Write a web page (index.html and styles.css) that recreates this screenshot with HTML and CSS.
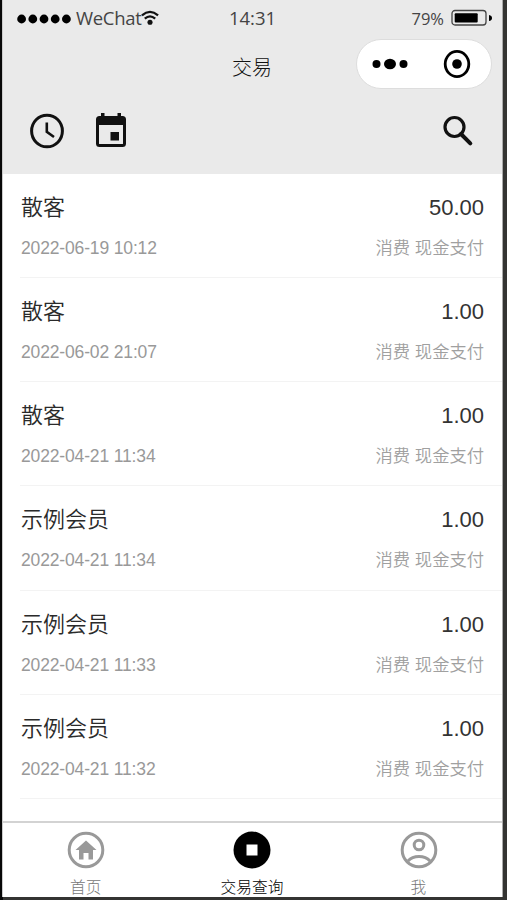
FILE: index.html
```html
<!DOCTYPE html>
<html lang="zh-CN">
<head>
<meta charset="utf-8">
<title>交易</title>
<link rel="stylesheet" href="styles.css">
</head>
<body>
<div class="phone">
  <header class="header">
    <div class="status">
      <div class="carrier">
        <svg class="signal" width="54" height="10" viewBox="0 0 54 10"><circle cx="4.6" cy="5" r="4.4"/><circle cx="15.8" cy="5" r="4.4"/><circle cx="27" cy="5" r="4.4"/><circle cx="38.2" cy="5" r="4.4"/><circle cx="49.4" cy="5" r="4.4"/></svg>
        <span class="carrier-name">WeChat</span>
        <svg class="wifi" width="18" height="16" viewBox="0 0 19 16" fill="none" stroke="#111" stroke-width="2.400"><path d="M1 5.200Q9.500-2 18 5.200M4 8.700Q9.500 3.800 15 8.700"/><circle cx="9.500" cy="12.500" r="2.700" fill="#111" stroke="none"/></svg>
      </div>
      <span class="time">14:31</span>
      <div class="power">
        <span class="percent">79%</span>
        <svg width="42" height="18" viewBox="0 0 42 18"><rect x="1" y="1.500" width="34" height="14.500" rx="3" fill="none" stroke="#444" stroke-width="1.300"/><rect x="3.700" y="4.200" width="23" height="9.300" rx="1"/><path d="M38 6q3 .5 3 3t-3 3z"/></svg>
      </div>
    </div>
    <div class="nav">
      <h1 class="title">交易</h1>
      <div class="capsule">
        <svg width="36" height="12" viewBox="0 0 36 12"><circle cx="4.500" cy="6" r="4"/><ellipse cx="18" cy="6" rx="6" ry="5.300"/><circle cx="31.500" cy="6" r="4"/></svg>
        <svg width="28" height="30" viewBox="0 0 28 30"><ellipse cx="14" cy="15" rx="11.800" ry="12.600" fill="none" stroke="#000" stroke-width="2.800"/><circle cx="14" cy="15" r="4.800"/></svg>
      </div>
    </div>
    <div class="tools">
      <svg class="clock" width="34" height="36" viewBox="0 0 34 36" fill="none" stroke="#111"><ellipse cx="17" cy="18" rx="15.400" ry="15.800" stroke-width="3"/><path d="M16.800 9.500v9.300l7.200 5.200" stroke-width="2.600"/></svg>
      <svg class="calendar" width="32" height="36" viewBox="0 0 32 36"><path fill="#111" fill-rule="evenodd" d="M6 0h3.500v3h13V0H26v3h1.500Q31 3 31 6.500v24q0 3.500-3.500 3.500h-23Q1 34 1 30.500v-24Q1 3 4.500 3H6zM4 12v18.500q0 .5.500.5h23q.5 0 .5-.5V12zM15.500 19h8.500v8.500h-8.500z"/></svg>
      <svg class="search" width="32" height="32" viewBox="0 0 32 32" fill="none" stroke="#111"><circle cx="12.500" cy="12" r="9.500" stroke-width="3.200"/><path d="M19 19l9.300 9.300" stroke-width="4" stroke-linecap="round"/></svg>
    </div>
  </header>
  <main class="list">
    <div class="row"><span class="name">散客</span><span class="amount">50.00</span><span class="date">2022-06-19 10:12</span><span class="kind">消费 现金支付</span></div>
    <div class="row"><span class="name">散客</span><span class="amount">1.00</span><span class="date">2022-06-02 21:07</span><span class="kind">消费 现金支付</span></div>
    <div class="row"><span class="name">散客</span><span class="amount">1.00</span><span class="date">2022-04-21 11:34</span><span class="kind">消费 现金支付</span></div>
    <div class="row"><span class="name">示例会员</span><span class="amount">1.00</span><span class="date">2022-04-21 11:34</span><span class="kind">消费 现金支付</span></div>
    <div class="row"><span class="name">示例会员</span><span class="amount">1.00</span><span class="date">2022-04-21 11:33</span><span class="kind">消费 现金支付</span></div>
    <div class="row"><span class="name">示例会员</span><span class="amount">1.00</span><span class="date">2022-04-21 11:32</span><span class="kind">消费 现金支付</span></div>
  </main>
  <nav class="tabs">
    <div class="tab">
      <svg width="38" height="38" viewBox="0 0 38 38"><circle cx="19" cy="19" r="16.800" fill="none" stroke="#999" stroke-width="3"/><path fill="#999" d="M19 9.500L29.500 19H26V28.500H21.500V22H16.500V28.500H12V19H8.500z"/></svg>
      <span>首页</span>
    </div>
    <div class="tab active">
      <svg width="38" height="38" viewBox="0 0 38 38"><circle cx="19" cy="19" r="18.500"/><path fill="#fff" d="M13.500 13.500h11v11h-11z"/></svg>
      <span>交易查询</span>
    </div>
    <div class="tab">
      <svg width="38" height="38" viewBox="0 0 38 38" fill="none" stroke="#999" stroke-width="3"><circle cx="19" cy="19" r="16.800"/><circle cx="19" cy="14" r="4.800"/><path d="M8 30Q12 25.500 19 25.500T30 30"/></svg>
      <span>我</span>
    </div>
  </nav>
</div>
</body>
</html>
```
FILE: styles.css
```css
* { box-sizing: border-box; }
body {
  margin: 0;
  height: 900px;
  overflow: hidden;
  padding: 0 4px 3px 2px;
  background: linear-gradient(90deg, #080808 0 3px, #343432 3px);
  font-family: "Liberation Sans", "Noto Sans CJK SC", sans-serif;
}
svg { display: block; flex: none; }
.phone {
  display: flex;
  flex-direction: column;
  height: 897px;
  background: #fff;
  border-right: 1px solid #aaa;
  border-left: 1px solid #ccc;
}
.header { height: 174px; background: #eaeaea; }
.status {
  display: grid;
  grid-template-columns: 1fr auto 1fr;
  align-items: center;
  height: 36px;
  padding: 0 9px 0 14px;
  font-family: "Open Sans", sans-serif;
  color: #444;
}
.carrier { display: flex; align-items: center; margin-top: -2px; }
.signal { margin-top: 3px; }
.carrier-name { margin-left: 5px; width: 65px; font-size: 18.5px; letter-spacing: -0.3px; white-space: nowrap; }
.wifi { margin-top: 1px; }
.time { font-size: 18.5px; margin: -2px 0 0 -5px; }
.power { display: flex; align-items: center; justify-content: flex-end; gap: 7px; }
.percent { font-size: 16.5px; }
.nav {
  display: grid;
  grid-template-columns: 1fr auto 1fr;
  align-items: center;
  height: 56px;
  padding: 0 10px 0 9px;
}
.title { grid-column: 2; margin: 4px 0 0; font-size: 20px; font-weight: 300; color: #111; }
.capsule {
  justify-self: end;
  display: flex;
  align-items: center;
  justify-content: space-between;
  width: 136px;
  height: 50px;
  padding: 0 20px 0 15px;
  border: 1px solid #ddd;
  border-radius: 25px;
  background: #fff;
}
.tools { display: flex; align-items: center; height: 76px; padding: 2px 28px 0 27px; }
.calendar { margin-left: 31px; }
.search { margin-left: auto; }
.list { flex: 1; padding-left: 17px; }
.row {
  display: grid;
  grid-template-columns: 1fr auto;
  grid-template-rows: 34px 28px;
  row-gap: 9px;
  align-items: center;
  height: 104.15px;
  padding: 17px 18px 0 1px;
  border-bottom: 1px solid #f3f3f3;
}
.row span { line-height: 28px; }
.name { font-size: 22px; font-weight: 350; color: #2a2a2a; }
.amount { font-size: 22px; color: #333; text-align: right; }
.date { font-size: 17.5px; letter-spacing: -0.15px; color: #999; }
.kind { font-size: 17.3px; font-weight: 350; color: #a0a0a0; text-align: right; }
.tabs {
  display: grid;
  grid-template-columns: repeat(3, 1fr);
  height: 76px;
  border-top: 2px solid #d3d3d3;
}
.tab {
  display: flex;
  flex-direction: column;
  align-items: center;
  padding-top: 8px;
  font-size: 15.7px;
  font-weight: 300;
  line-height: 20px;
  color: #777;
}
.tab span { margin: 9px 1px 0 0; }
.tab.active { color: #000; }
```
